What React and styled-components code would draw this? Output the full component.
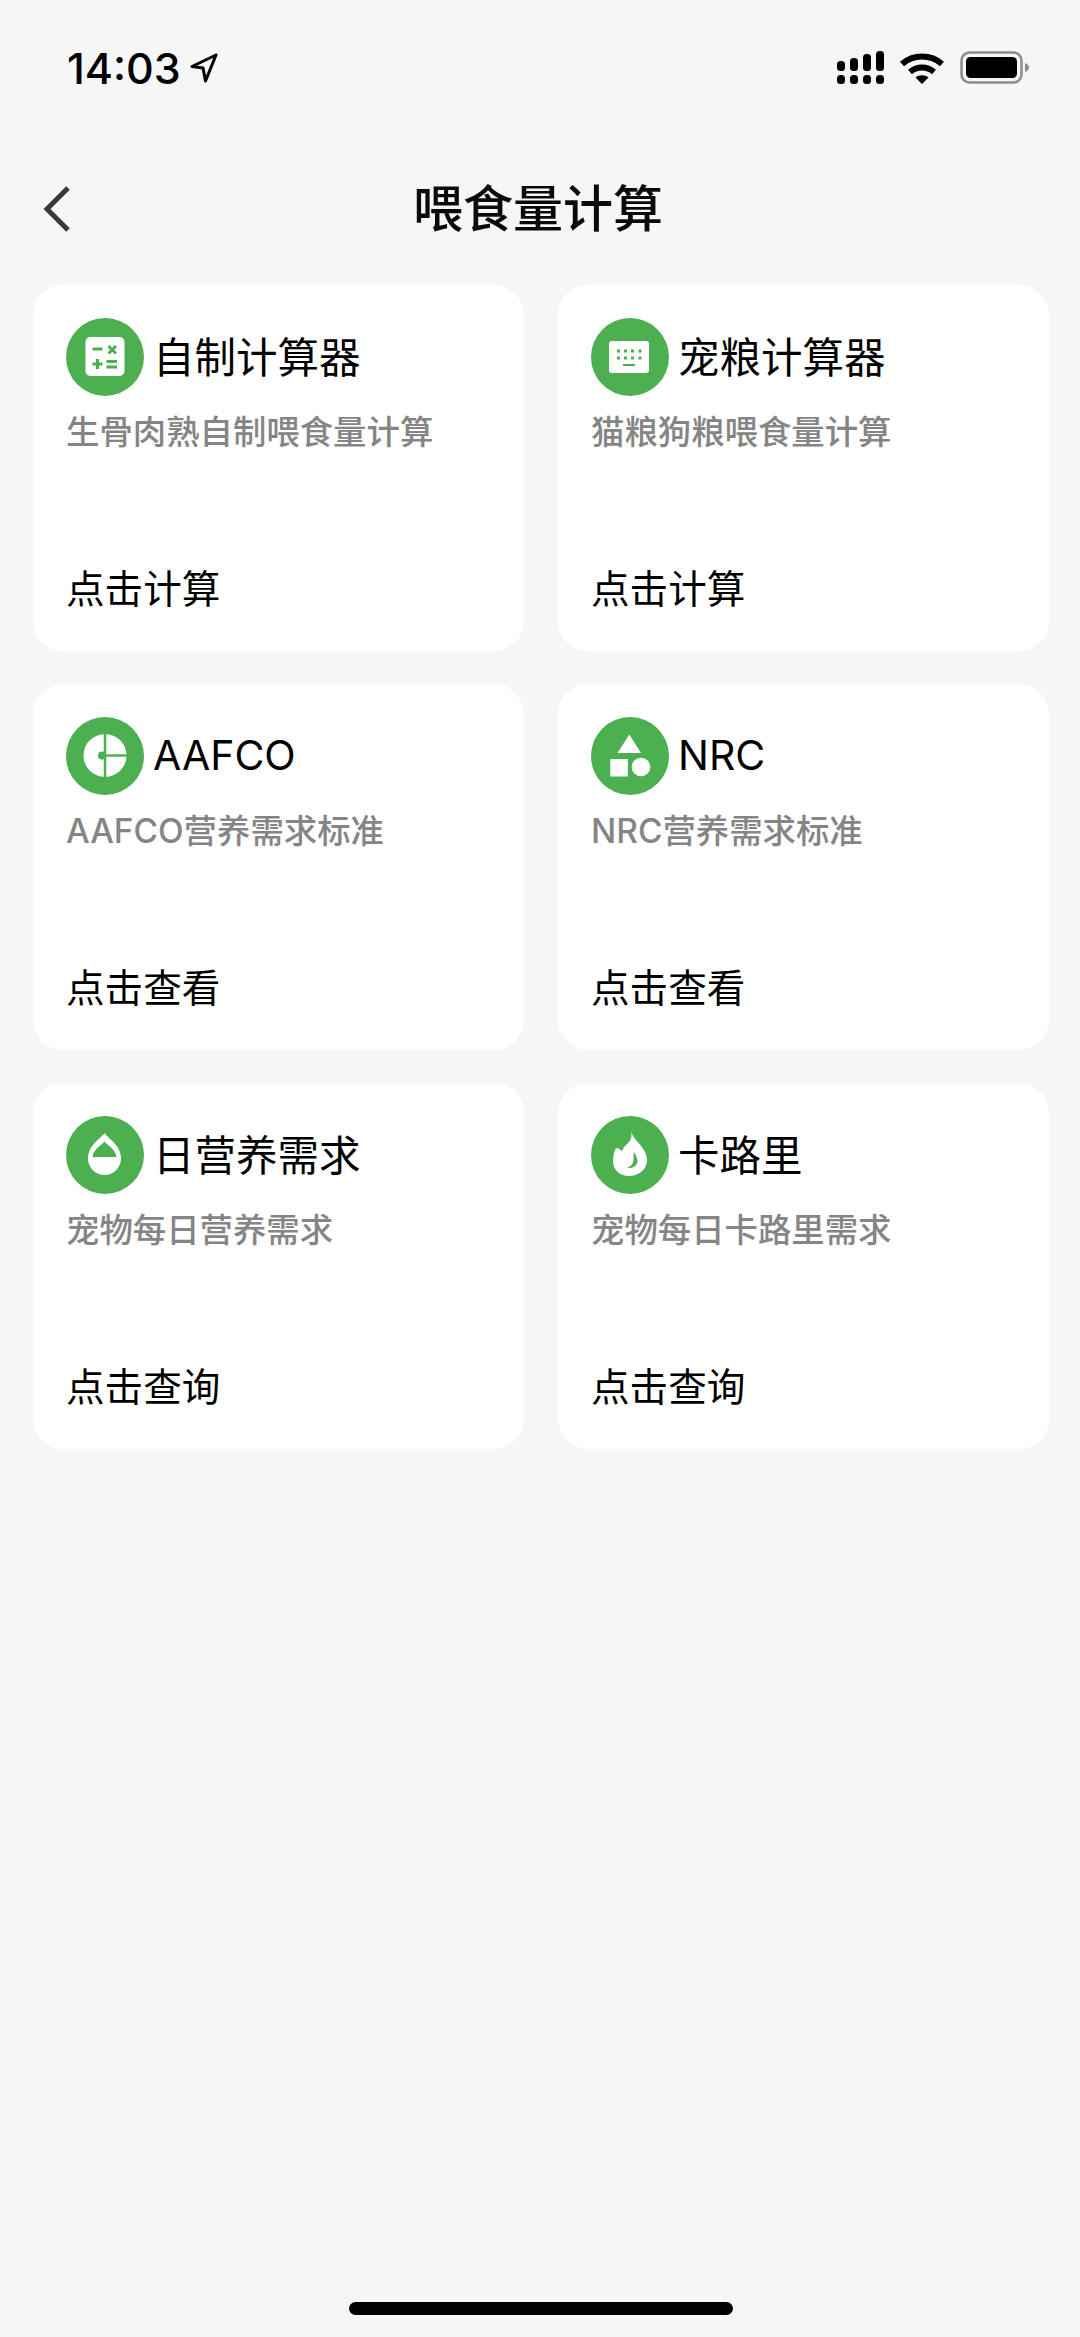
import React from "react";
import styled, { createGlobalStyle } from "styled-components";

const GlobalStyle = createGlobalStyle`
  html, body {
    margin: 0;
    padding: 0;
    background: #f6f6f6;
  }
  * {
    box-sizing: border-box;
  }
`;

const Page = styled.div`
  position: relative;
  width: 1080px;
  height: 2337px;
  overflow: hidden;
  background: #f6f6f6;
  font-family: "Inter", "Noto Sans CJK SC", sans-serif;
  color: #000;
`;

const StatusBar = styled.div`
  height: 134px;
  padding: 43px 50px 0 67px;
  display: flex;
  justify-content: space-between;
  align-items: flex-start;
`;

const Clock = styled.div`
  display: flex;
  align-items: center;
  gap: 9px;
  font-size: 43px;
  line-height: 50px;
  font-weight: 500;
`;

const StatusIcons = styled.div`
  display: flex;
  align-items: center;
  gap: 15px;
  height: 50px;
`;

const Header = styled.div`
  position: relative;
  height: 151px;
  display: flex;
  align-items: center;
  justify-content: center;
`;

const BackButton = styled.div`
  position: absolute;
  left: 40px;
  top: 47px;
  width: 36px;
  height: 56px;
`;

const Title = styled.div`
  font-size: 50px;
  line-height: 60px;
  font-weight: 500;
  color: #0a0a0a;
  margin-top: -2px;
  margin-left: -4px;
`;

const Grid = styled.div`
  display: grid;
  grid-template-columns: 491px 491px;
  grid-auto-rows: 366px;
  column-gap: 34px;
  row-gap: 33px;
  padding-left: 33px;
`;

const Card = styled.div`
  background: #fff;
  border-radius: 30px;
  padding: 33px 33px 0 33px;
  display: flex;
  flex-direction: column;
`;

const CardHead = styled.div`
  display: flex;
  align-items: center;
  gap: 9px;
  height: 78px;
`;

const IconCircle = styled.div`
  width: 78px;
  height: 78px;
  flex: none;
  border-radius: 50%;
  background: #4caf50;
`;

const CardTitle = styled.div`
  font-size: ${(p) => (p.$latin ? "41px" : "41.5px")};
  line-height: 50px;
  font-weight: 400;
  white-space: nowrap;
  margin-top: ${(p) => (p.$latin ? "-2px" : "1px")};
`;

const CardDesc = styled.div`
  margin-top: 15px;
  font-size: 33.4px;
  line-height: 42px;
  font-weight: 500;
  color: #858585;
  white-space: nowrap;
`;

const CardAction = styled.div`
  margin-top: 111px;
  font-size: 38.6px;
  line-height: 50px;
  font-weight: 400;
  color: #000;
`;

const HomeBar = styled.div`
  position: absolute;
  left: 349px;
  bottom: 22px;
  width: 384px;
  height: 13px;
  border-radius: 7px;
  background: #000;
`;

const CircleSvg = styled.svg`
  display: block;
`;

const CalcIcon = () => (
  <CircleSvg width="78" height="78" viewBox="0 0 78 78">
    <rect x="19.500" y="19" width="39" height="39" rx="5" fill="#fff" />
    <g stroke="#4caf50" strokeWidth="3" fill="none">
      <path d="M26.500 31h10" />
      <path d="M42.500 28l7.500 7.500M50 28l-7.500 7.500" />
      <path d="M26.500 46h10M31.500 41v10" />
      <path d="M40.500 43.500h10.500M40.500 49h10.500" />
    </g>
  </CircleSvg>
);

const KeyboardIcon = () => (
  <CircleSvg width="78" height="78" viewBox="0 0 78 78">
    <rect x="18" y="23" width="40" height="32" rx="3" fill="#fff" />
    <g fill="#4caf50">
      {[26, 33, 40, 47.500].map((x) => (
        <rect key={x} x={x} y="31.500" width="3" height="3" />
      ))}
      {[26, 33, 40, 47.500].map((x) => (
        <rect key={x} x={x} y="38.500" width="3" height="3" />
      ))}
      <rect x="32" y="46" width="12" height="2" />
    </g>
  </CircleSvg>
);

const PieIcon = () => (
  <CircleSvg width="78" height="78" viewBox="0 0 78 78">
    <circle cx="39" cy="38.500" r="21.500" fill="#fff" />
    <g stroke="#4caf50" strokeWidth="2.500" fill="none">
      <path d="M39 15v48" />
      <path d="M39 38.500h23" />
    </g>
    <circle cx="36" cy="38.500" r="4" fill="#4caf50" />
  </CircleSvg>
);

const ShapesIcon = () => (
  <CircleSvg width="78" height="78" viewBox="0 0 78 78" fill="#fff">
    <path d="M38.300 17.500L50 36H26.500z" />
    <rect x="19.300" y="42" width="17.500" height="17.500" />
    <circle cx="50" cy="50" r="9.300" />
  </CircleSvg>
);

const DropIcon = () => (
  <CircleSvg width="78" height="78" viewBox="0 0 78 78">
    <path
      d="M38.500 17c3 5 16.500 12 16.500 25.500a16.500 16.500 0 0 1-33 0C22 29 35.500 22 38.500 17z"
      fill="#fff"
    />
    <path
      d="M38.500 25.500c2 3 11.500 8 12 15.500h-24c.5-7.500 10-12.500 12-15.500z"
      fill="#4caf50"
    />
  </CircleSvg>
);

const FlameIcon = () => (
  <CircleSvg width="78" height="78" viewBox="0 0 78 78">
    <path
      d="M40 16c2 8-3 11-7 15-1 2-1.500 3-2.500 4-1-1.500-3-3-5.500-3-2 4-3 8-3 13 0 9 7 15 16 15s18-6 18-16c0-12-12-18-16-28z"
      fill="#fff"
    />
    <path
      d="M43 36c3 5 5 10 2 13-2 2.500-6 3.500-9 2.500 4-1 6-3.500 6.500-7 .300-3-.500-6 .500-8.500z"
      fill="#4caf50"
    />
  </CircleSvg>
);

const LocationArrow = () => (
  <svg width="28" height="30" viewBox="0 0 28 30" fill="none">
    <path
      d="M26 2L2 13.500l11 1.500 2.500 13z"
      stroke="#000"
      strokeWidth="3"
      strokeLinejoin="round"
    />
  </svg>
);

const SignalDots = () => (
  <svg width="47" height="34" viewBox="0 0 47 34" fill="#000">
    <rect x="0" y="10" width="8" height="10" rx="3.500" />
    <rect x="13" y="7" width="8" height="13" rx="3.500" />
    <rect x="26" y="3" width="8" height="17" rx="3.500" />
    <rect x="39" y="0" width="8" height="20" rx="3.500" />
    <rect x="0" y="24" width="8" height="9" rx="3.500" />
    <rect x="13" y="24" width="8" height="9" rx="3.500" />
    <rect x="26" y="24" width="8" height="9" rx="3.500" />
    <rect x="39" y="24" width="8" height="9" rx="3.500" />
  </svg>
);

const WifiIcon = () => (
  <svg width="46" height="34" viewBox="0 0 46 34" fill="none" stroke="#000" strokeWidth="6">
    <path d="M3 13c11-10 29-10 40 0" />
    <path d="M11 21c7-6 17-6 24 0" />
    <path d="M23 33l-6.500-6.500c3.500-3 9.500-3 13 0z" fill="#000" stroke="none" />
  </svg>
);

const BatteryIcon = () => (
  <svg width="70" height="34" viewBox="0 0 70 34">
    <rect x="1.500" y="1.500" width="60" height="30" rx="8" fill="none" stroke="#8c8c8c" strokeWidth="2.500" />
    <rect x="6" y="6" width="51" height="21" rx="4.500" fill="#000" />
    <path d="M65 12c3 1 4 3 4 4.500s-1 3.500-4 4.500z" fill="#8c8c8c" />
  </svg>
);

const cards = [
  { icon: CalcIcon, title: "自制计算器", desc: "生骨肉熟自制喂食量计算", action: "点击计算" },
  { icon: KeyboardIcon, title: "宠粮计算器", desc: "猫粮狗粮喂食量计算", action: "点击计算" },
  { icon: PieIcon, title: "AAFCO", latin: true, desc: "AAFCO营养需求标准", action: "点击查看" },
  { icon: ShapesIcon, title: "NRC", latin: true, desc: "NRC营养需求标准", action: "点击查看" },
  { icon: DropIcon, title: "日营养需求", desc: "宠物每日营养需求", action: "点击查询" },
  { icon: FlameIcon, title: "卡路里", desc: "宠物每日卡路里需求", action: "点击查询" },
];

export default function App() {
  return (
    <Page>
      <GlobalStyle />
      <StatusBar>
        <Clock>
          14:03
          <LocationArrow />
        </Clock>
        <StatusIcons>
          <SignalDots />
          <WifiIcon />
          <BatteryIcon />
        </StatusIcons>
      </StatusBar>
      <Header>
        <BackButton>
          <svg width="36" height="56" viewBox="0 0 36 56" fill="none">
            <path d="M28 7L7 28l21 21" stroke="#3a3a3a" strokeWidth="5" />
          </svg>
        </BackButton>
        <Title>喂食量计算</Title>
      </Header>
      <Grid>
        {cards.map((card) => {
          const Icon = card.icon;
          return (
            <Card key={card.title}>
              <CardHead>
                <IconCircle>
                  <Icon />
                </IconCircle>
                <CardTitle $latin={card.latin}>{card.title}</CardTitle>
              </CardHead>
              <CardDesc>{card.desc}</CardDesc>
              <CardAction>{card.action}</CardAction>
            </Card>
          );
        })}
      </Grid>
      <HomeBar />
    </Page>
  );
}
